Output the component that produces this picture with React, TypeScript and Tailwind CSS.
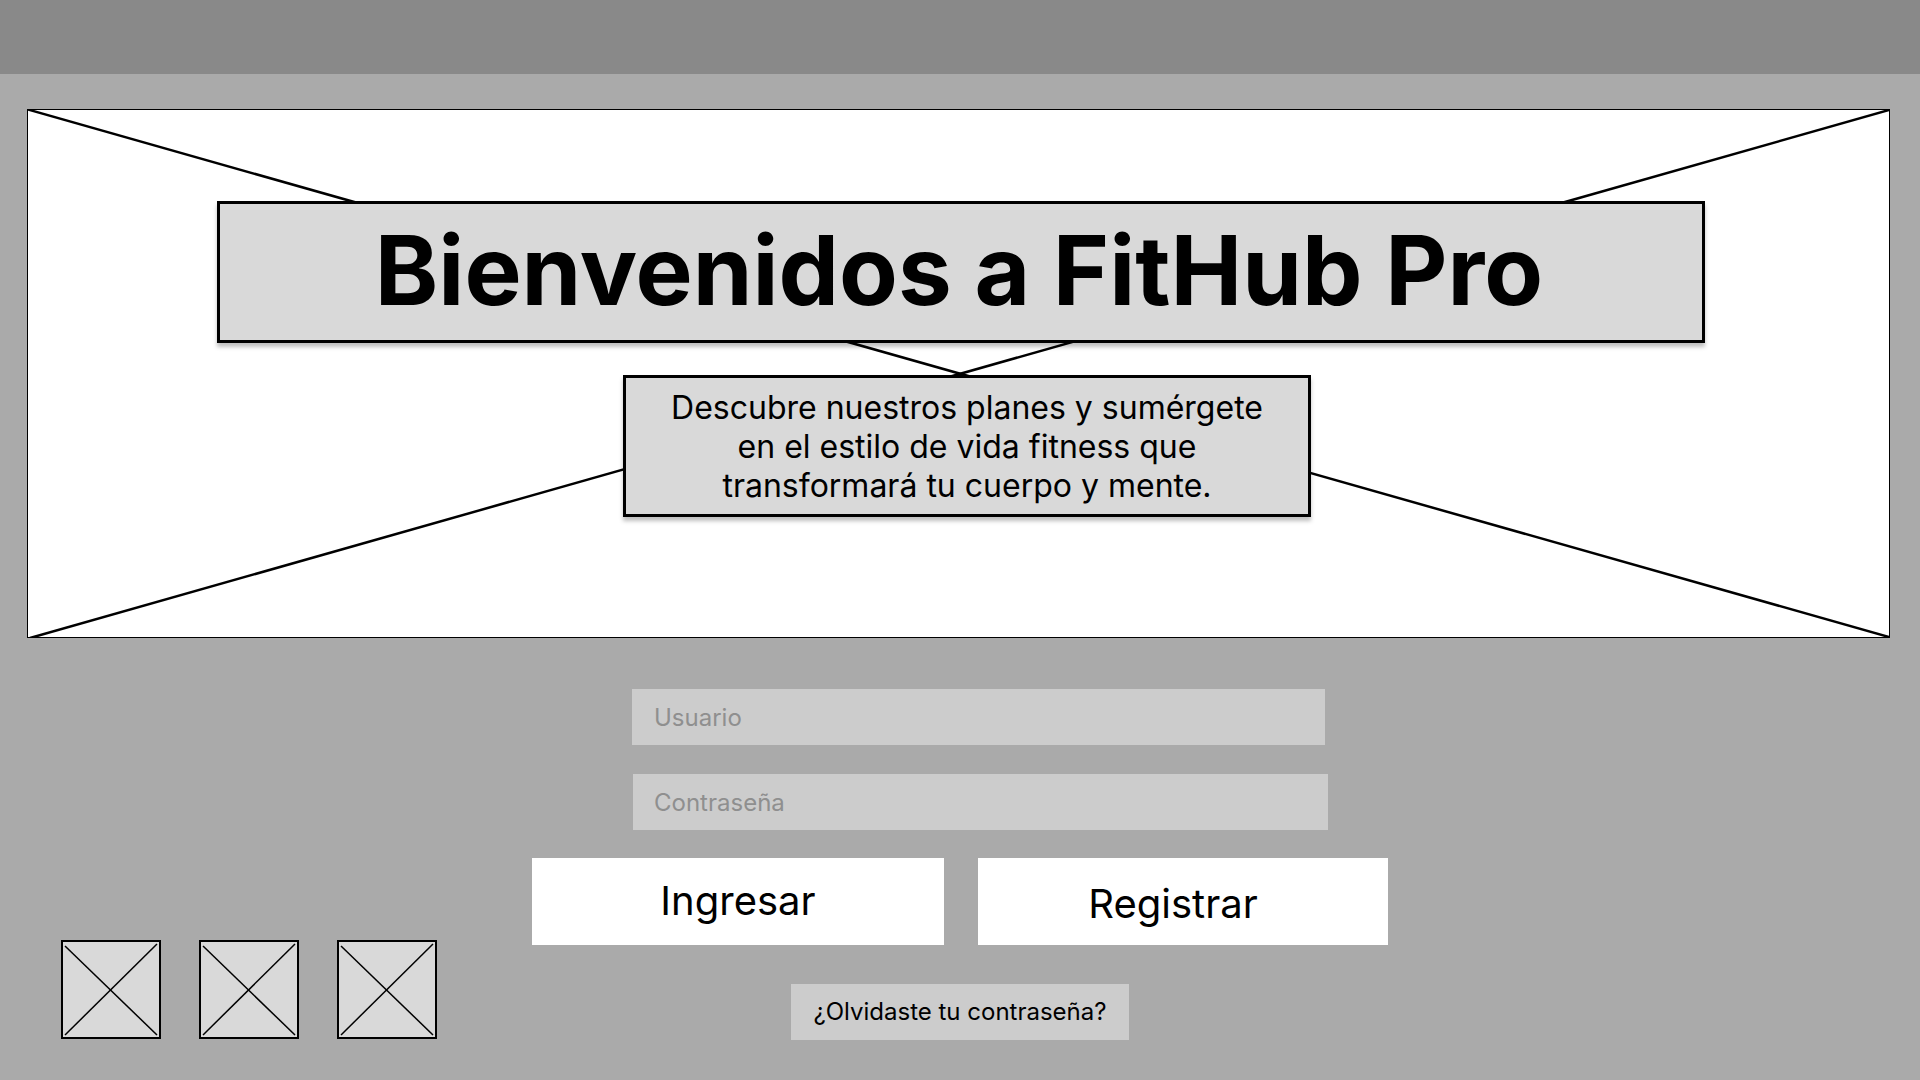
const font = { fontFamily: "Inter, 'Noto Sans', sans-serif" };

const Thumb = () => (
  <div className="w-[100px] h-[99px] border-2 border-black bg-[#d9d9d9]">
    <svg viewBox="0 0 96 95" className="w-full h-full block">
      <line x1="2" y1="4" x2="94" y2="93" stroke="black" strokeWidth="1.5" />
      <line x1="94" y1="2" x2="2" y2="93" stroke="black" strokeWidth="1.5" />
    </svg>
  </div>
);

const Hero = () => (
  <section className="relative mt-[35px] ml-[27px] w-[1863px] h-[529px] bg-white border border-black">
    <svg
      className="absolute inset-0 w-full h-full"
      viewBox="0 0 1861 527"
      preserveAspectRatio="none"
    >
      <line x1="-2" y1="-1" x2="1861" y2="527" stroke="black" strokeWidth="2.5" />
      <line x1="1861" y1="0" x2="2" y2="528" stroke="black" strokeWidth="2.5" />
    </svg>
    <div className="relative flex flex-col pt-[91px]">
      <div className="ml-[189px] w-[1488px] h-[142px] flex items-center justify-center bg-[#d9d9d9] border-[3px] border-black shadow-[0_4px_4px_rgba(0,0,0,0.25)]">
        <h1 className="text-[96px] font-bold leading-none text-black pb-[4px] pr-[4px]">
          Bienvenidos a FitHub Pro
        </h1>
      </div>
      <div className="mt-[32px] ml-[595px] w-[688px] h-[142px] flex items-center justify-center bg-[#d9d9d9] border-[3px] border-black shadow-[0_4px_4px_rgba(0,0,0,0.25)]">
        <p className="text-[32px] leading-[39px] text-center text-black">
          Descubre nuestros planes y sumérgete
          <br />
          en el estilo de vida fitness que
          <br />
          transformará tu cuerpo y mente.
        </p>
      </div>
    </div>
  </section>
);

export default function App() {
  return (
    <div className="w-[1920px] h-[1080px] overflow-hidden bg-[#aaaaaa] flex flex-col" style={font}>
      <header className="h-[74px] bg-[#898989] shrink-0" />
      <Hero />
      <div className="grid grid-cols-[1fr_856px_1fr] flex-1">
        <div className="flex items-end gap-[38px] pl-[61px] pb-[41px]">
          <Thumb />
          <Thumb />
          <Thumb />
        </div>
        <form className="flex flex-col pt-[51px]" onSubmit={(e) => e.preventDefault()}>
          <input
            className="ml-[100px] w-[693px] h-[56px] bg-[#cccccc] px-[22px] text-[24px] text-black placeholder:text-[#8f8f8f] outline-none"
            placeholder="Usuario"
          />
          <input
            type="password"
            className="mt-[29px] ml-[101px] w-[695px] h-[56px] bg-[#cccccc] px-[21px] text-[24px] text-black placeholder:text-[#8f8f8f] outline-none"
            placeholder="Contraseña"
          />
          <div className="mt-[28px] flex gap-[34px]">
            <button type="submit" className="w-[412px] h-[87px] bg-white text-[40px] text-black pb-[2px]">
              Ingresar
            </button>
            <button type="button" className="w-[410px] h-[87px] bg-white text-[40px] text-black pt-[4px] pr-[20px]">
              Registrar
            </button>
          </div>
          <button
            type="button"
            className="mt-[39px] self-center w-[338px] h-[56px] bg-[#cccccc] text-[24px] text-black"
          >
            ¿Olvidaste tu contraseña?
          </button>
        </form>
        <div />
      </div>
    </div>
  );
}
